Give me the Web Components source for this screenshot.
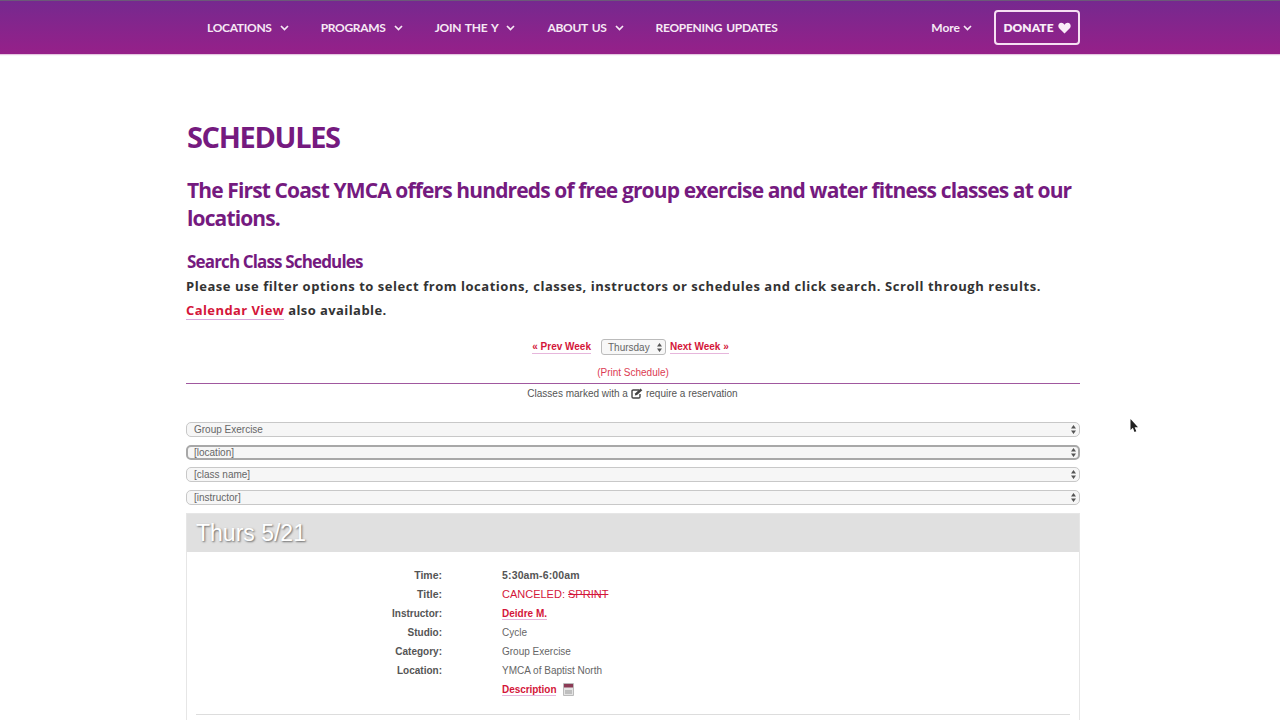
<!DOCTYPE html>
<html lang="en">
<head>
<meta charset="utf-8">
<title>Schedules</title>
<style>
  html, body { margin: 0; height: 720px; overflow: hidden; background: #fff; }
  body { font-family: "Liberation Sans", Arial, sans-serif; }
</style>
</head>
<body>
<template id="y-nav-template">
 <style>
  :host { display: block; height: 54px; background: linear-gradient(#76298f, #962089); border-top: 1px solid #6b5a78; box-sizing: border-box; box-shadow: 0 1px 1px rgba(150,32,137,.25); }
  .bar { width: 894px; height: 53px; margin-left: 186px; display: flex; align-items: center; padding-left: 21px; box-sizing: border-box; }
  .right { margin-left: auto; display: flex; align-items: center; gap: 22px; }
  .more { display: flex; align-items: center; gap: 3px; color: #f6e9f5; font: 700 12px "Lato", sans-serif; }
  .donate { display: flex; align-items: center; justify-content: center; gap: 4px; box-sizing: border-box; width: 86px; height: 35px; border: 2px solid #f6e0f3; border-radius: 4px; color: #f9edf8; font: 800 12px "Lato", sans-serif; }
 </style>
 <div class="bar">
  <slot></slot>
  <div class="right">
   <div class="more">More <svg width="9" height="6" viewBox="0 0 9 6"><path d="M1 1l3.500 3.500L8 1" fill="none" stroke="#f6e9f5" stroke-width="1.700"/></svg></div>
   <div class="donate">DONATE <svg width="13" height="12" viewBox="0 0 13 12"><path d="M6.500 11.500L1.200 6.200C-.6 4.200.5 .8 3.300.8c1.400 0 2.500.8 3.200 2 .7-1.200 1.800-2 3.200-2 2.800 0 3.900 3.400 2.100 5.400z" fill="#f9edf8"/></svg></div>
  </div>
 </div>
</template>

<template id="nav-item-template">
 <style>
  :host { display: flex; align-items: center; gap: 8px; margin-right: 32px; color: #f6e9f5; font: 700 12px "Lato", sans-serif; letter-spacing: -.3px; word-spacing: 1.500px; white-space: nowrap; }
  svg { display: block; }
  :host([plain]) svg { display: none; }
 </style>
 <slot></slot>
 <svg width="9" height="6" viewBox="0 0 9 6"><path d="M1 1l3.500 3.500L8 1" fill="none" stroke="#f6e9f5" stroke-width="1.700"/></svg>
</template>

<template id="page-intro-template">
 <style>
  :host { display: block; color: #751a7f; font-family: "Open Sans", sans-serif; }
  h1 { margin: 0 0 0 1px; padding-top: 64px; font-size: 29px; line-height: 38px; font-weight: 700; letter-spacing: -1.350px; }
  h2 { margin: 21px 0 0 1px; font-size: 21px; line-height: 27.500px; font-weight: 700; letter-spacing: -.87px; }
  h3 { margin: 18px 0 0 1px; font-size: 17px; line-height: 24px; font-weight: 700; letter-spacing: -.85px; }
  p { margin: 0; color: #333; font: 700 13px/24px "Open Sans", sans-serif; letter-spacing: .54px; white-space: nowrap; }
  p + p { letter-spacing: .42px; }
  a { color: #d4163a; border-bottom: 1px solid #d8a8dc; }
 </style>
 <h1>SCHEDULES</h1>
 <h2>The First Coast YMCA offers hundreds of free group exercise and water fitness classes at our locations.</h2>
 <h3>Search Class Schedules</h3>
 <p>Please use filter options to select from locations, classes, instructors or schedules and click search. Scroll through results.</p>
 <p><a>Calendar View</a> also available.</p>
</template>

<template id="week-picker-template">
 <style>
  :host { display: block; margin-top: 16px; font-family: "Liberation Sans", Arial, sans-serif; font-size: 10px; color: #555; }
  .week { display: flex; justify-content: center; align-items: center; gap: 4px; height: 18px; padding-right: 5px; }
  .week a { color: #d4163a; font-weight: 700; border-bottom: 1px solid #e6b6dc; line-height: 12px; }
  .day { display: flex; align-items: center; box-sizing: border-box; width: 65px; height: 16px; margin-left: 6px; padding: 0 3px 0 6px; border: 1px solid #bbb; border-radius: 3px; background: #f7f7f7; color: #666; justify-content: space-between; }
  .print { text-align: center; color: #dc3a52; margin-top: 10px; line-height: 14px; }
  .rule { margin-top: 3px; height: 1px; background: #a0589f; }
  .note { display: flex; justify-content: center; align-items: center; gap: 3px; height: 19px; color: #555; padding-right: 1px; }
  .note svg { display: block; }
 </style>
 <div class="week">
  <a>« Prev Week</a>
  <div class="day">Thursday <svg width="5" height="9" viewBox="0 0 5 9"><path d="M2.500 0L5 3.500H0zM2.500 9L0 5.500h5z" fill="#555"/></svg></div>
  <a>Next Week »</a>
 </div>
 <div class="print">(Print Schedule)</div>
 <div class="rule"></div>
 <div class="note">Classes marked with a <svg width="12" height="11" viewBox="0 0 12 11"><path d="M8 2H2.200C1.500 2 1 2.500 1 3.200v5.600C1 9.500 1.500 10 2.200 10h5.600C8.500 10 9 9.500 9 8.800V6" fill="none" stroke="#444" stroke-width="1.400"/><path d="M3.800 7.500l.5-2.200L9.500.5l1.800 1.700-5.200 4.800z" fill="#444"/></svg> require a reservation</div>
</template>

<template id="filter-select-template">
 <style>
  :host { display: flex; align-items: center; justify-content: space-between; box-sizing: border-box; height: 15px; margin-top: 7.500px; padding: 0 3px 0 7px; border: 1px solid #c8c8c8; border-radius: 5px; background: #f6f6f6; color: #666; font: 10px "Liberation Sans", Arial, sans-serif; }
  :host([focused]) { border: 2px solid #a8a8a8; padding-left: 6px; padding-right: 2px; }
  svg { display: block; }
 </style>
 <slot></slot>
 <svg width="5" height="9" viewBox="0 0 5 9"><path d="M2.500 0L5 3.500H0zM2.500 9L0 5.500h5z" fill="#555"/></svg>
</template>

<template id="class-card-template">
 <style>
  :host { display: block; margin-top: 8px; box-sizing: border-box; height: 220px; border: 1px solid #e6e6e6; border-bottom: 0; font: 10px "Liberation Sans", Arial, sans-serif; }
  .head { height: 38px; background: #e0e0e0; color: #fff; font-size: 23px; line-height: 38px; padding-left: 9px; text-shadow: 1px 1px 2px #6a6a6a; }
  .rows { padding-top: 13.500px; }
  .end { margin: 15px 9px 0; border-top: 1px solid #ddd; }
 </style>
 <div class="head"><slot name="title"></slot></div>
 <div class="rows"><slot></slot></div>
 <div class="end"></div>
</template>

<template id="detail-row-template">
 <style>
  :host { display: grid; grid-template-columns: 255px 1fr; column-gap: 60px; box-sizing: border-box; height: 19px; align-items: center; color: #666; font: 10px "Liberation Sans", Arial, sans-serif; }
  :host([low]) { padding-top: 1px; }
  .label { text-align: right; font-weight: 700; color: #555; }
 </style>
 <div class="label"><slot name="label"></slot></div>
 <div><slot></slot></div>
</template>

<template id="mouse-cursor-template">
 <style>
  :host { position: absolute; left: 1130px; top: 419px; display: block; width: 8px; height: 14px; }
 </style>
 <svg width="8" height="14" viewBox="0 0 8 14"><path d="M.5 0v11l2.400-2.200L4.500 13l1.800-.8-1.700-4H8z" fill="#222"/></svg>
</template>

<y-nav>
 <nav-item>LOCATIONS</nav-item>
 <nav-item>PROGRAMS</nav-item>
 <nav-item>JOIN THE Y</nav-item>
 <nav-item>ABOUT US</nav-item>
 <nav-item plain>REOPENING UPDATES</nav-item>
</y-nav>
<schedule-page>
 <page-intro></page-intro>
 <week-picker></week-picker>
 <filter-select style="margin-top:19px">Group Exercise</filter-select>
 <filter-select focused>[location]</filter-select>
 <filter-select>[class name]</filter-select>
 <filter-select>[instructor]</filter-select>
 <class-card>
  <span slot="title">Thurs 5/21</span>
  <detail-row><span slot="label" style="font-size:10.500px">Time:</span><b style="color:#555;font-size:10.500px;letter-spacing:.15px">5:30am-6:00am</b></detail-row>
  <detail-row><span slot="label" style="font-size:10.500px">Title:</span><span style="color:#d4163a;font-size:11px">CANCELED: <s>SPRINT</s></span></detail-row>
  <detail-row low><span slot="label">Instructor:</span><b style="color:#d4163a;border-bottom:1px solid #e6b6dc">Deidre M.</b></detail-row>
  <detail-row low><span slot="label">Studio:</span>Cycle</detail-row>
  <detail-row low><span slot="label">Category:</span>Group Exercise</detail-row>
  <detail-row low><span slot="label">Location:</span>YMCA of Baptist North</detail-row>
  <detail-row style="margin-top:1px"><span slot="label"></span><span style="display:flex;align-items:center;gap:7px"><b style="color:#d4163a;border-bottom:1px solid #e6b6dc;letter-spacing:-.05px">Description</b><svg width="11" height="13" viewBox="0 0 11 13"><path d="M.5.500h10v12H.5z" fill="#e4e4e4" stroke="#bbb"/><path d="M1 1h9v3.500H1z" fill="#8b3a55"/><path d="M2 8h7M2 10h7" stroke="#999"/></svg></span></detail-row>
 </class-card>
</schedule-page>
<mouse-cursor></mouse-cursor>

<script>
 // every element clones its own template into an open shadow root
 function fromTemplate(tag, id) {
     customElements.define(tag, class extends HTMLElement {
         constructor() {
             super();
             this.attachShadow({ mode: 'open' });
             this.shadowRoot.appendChild(document.getElementById(id).content.cloneNode(true));
         }
     });
 }
 fromTemplate('y-nav', 'y-nav-template');
 fromTemplate('nav-item', 'nav-item-template');
 fromTemplate('page-intro', 'page-intro-template');
 fromTemplate('week-picker', 'week-picker-template');
 fromTemplate('filter-select', 'filter-select-template');
 fromTemplate('class-card', 'class-card-template');
 fromTemplate('detail-row', 'detail-row-template');
 fromTemplate('mouse-cursor', 'mouse-cursor-template');

 customElements.define('schedule-page', class SchedulePage extends HTMLElement {
     constructor() {
         super();
         this.attachShadow({ mode: 'open' }).innerHTML =
             '<style>:host { display: block; width: 894px; margin-left: 186px; }</style><slot></slot>';
     }
 });
</script>
</body>
</html>
